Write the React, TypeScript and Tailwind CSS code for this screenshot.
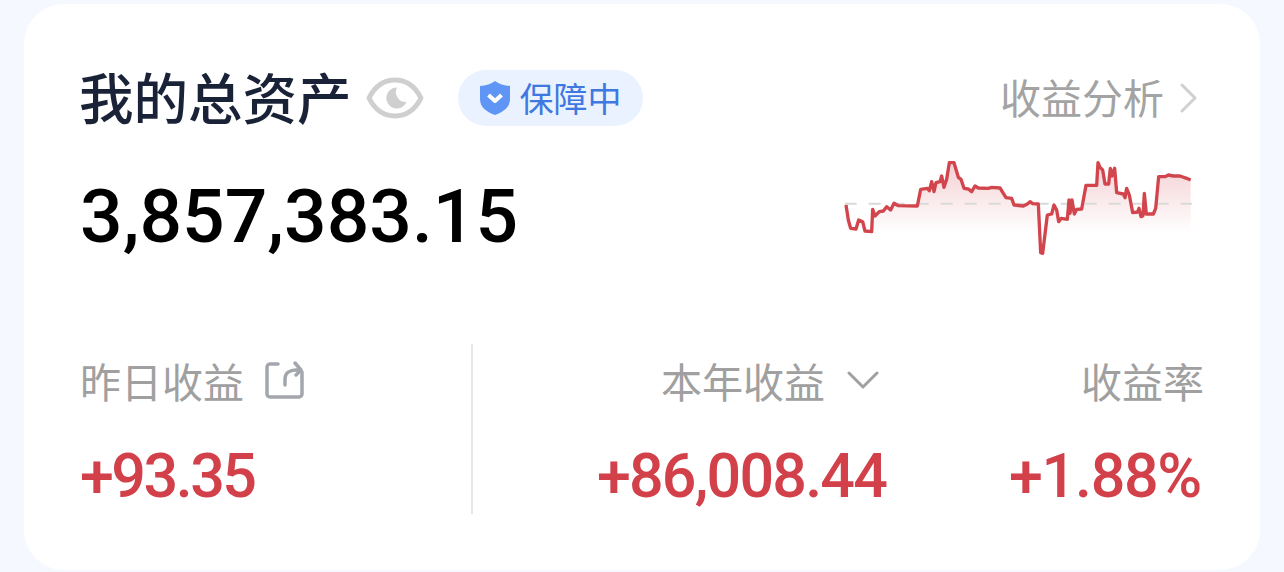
const cjk = "font-['Noto_Sans_CJK_SC','Noto_Sans',sans-serif]";
const num = "font-['Roboto','Liberation_Sans',sans-serif]";

const linePoints =
  "18,165 25,210 32,235 48,237 56,210 68,215 75,243 95,245 98,178 105,198 118,185 130,183 140,170 152,180 162,160 175,167 232,168 242,118 262,115 268,122 275,95 282,125 288,98 300,95 305,78 312,112 320,88 328,38 342,38 355,82 363,88 372,115 385,117 395,125 405,108 415,114 445,115 455,112 480,114 498,143 515,145 522,165 550,168 562,162 570,155 578,161 595,162 602,308 608,310 622,195 635,192 642,165 650,180 656,215 664,205 682,208 687,150 690,190 696,150 703,192 710,178 725,177 738,106 770,106 774,38 780,52 788,60 795,102 806,102 811,55 816,78 824,55 830,128 850,132 855,143 860,115 868,135 878,188 893,186 897,175 903,200 909,197 913,130 919,192 940,192 947,175 956,80 975,80 985,75 1000,78 1020,78 1040,85 1052,90";

const EyeIcon = () => (
  <svg width="58" height="48" viewBox="0 0 58 48" fill="none">
    <path
      d="M3 24C9 12 18 6 29 6s20 6 26 18c-6 12-15 18-26 18S9 36 3 24Z"
      stroke="#cfcfcf"
      strokeWidth="5"
      strokeLinejoin="round"
    />
    <path d="M31 13.5a10.5 10.5 0 1 0 9.5 14.5 10 10 0 0 1-9.500-14.500Z" fill="#cfcfcf" />
  </svg>
);

const ShieldIcon = () => (
  <svg width="32" height="36" viewBox="0 0 32 36">
    <path
      d="M16 1c4 3 9 4.500 15 5v13c0 8-6 12.500-15 16C7 31.500 1 27 1 19V6c6-.5 11-2 15-5Z"
      fill="#5f95f5"
    />
    <path d="M9.500 15l6.500 6 6.500-6" fill="none" stroke="#fff" strokeWidth="4" strokeLinejoin="round" />
  </svg>
);

const ShareIcon = () => (
  <svg width="40" height="40" viewBox="0 0 40 40" fill="none" stroke="#a3a6ad" strokeWidth="3.500" strokeLinecap="round" strokeLinejoin="round">
    <path d="M14 4H6a3 3 0 0 0-3 3v27a3 3 0 0 0 3 3h29a3 3 0 0 0 3-3V12" />
    <path d="M21 25v-6c0-6 5-9 11-9h5M31 3l6 7-5 5" />
  </svg>
);

const ChartLine = () => (
  <svg width="360" height="110" viewBox="0 0 1080 330" fill="none">
    <defs>
      <linearGradient id="chartFill" x1="0" y1="38" x2="0" y2="250" gradientUnits="userSpaceOnUse">
        <stop offset="0" stopColor="#d2404a" stopOpacity="0.24" />
        <stop offset="1" stopColor="#d2404a" stopOpacity="0" />
      </linearGradient>
    </defs>
    <polygon points={`18,250 ${linePoints} 1052,250`} fill="url(#chartFill)" />
    <line x1="14" y1="161" x2="1056" y2="161" stroke="#d9d9d9" strokeWidth="6" strokeDasharray="36 36" />
    <polyline points={linePoints} stroke="#d2454d" strokeWidth="10" strokeLinejoin="round" />
  </svg>
);

export default function App() {
  return (
    <div className="h-[572px] w-[1284px] overflow-hidden bg-[#f5f9ff] px-6 pt-1">
      <div className={`h-[566px] w-[1236px] rounded-[40px] bg-white pl-14 pr-14 ${cjk}`}>
        <div className="flex items-start justify-between pt-[60px]">
          <div>
            <div className="flex h-[68px] items-center">
              <span className="mb-1 -ml-px text-[54.500px] font-medium leading-none text-[#1a2238]">我的总资产</span>
              <span className="ml-[14px]"><EyeIcon /></span>
              <span className="ml-[34px] flex h-[56px] w-[185px] items-center rounded-full bg-[#e9f2fe] pl-[21px]">
                <ShieldIcon />
                <span className="ml-[9px] text-[34px] leading-none text-[#3f78e0]">保障中</span>
              </span>
            </div>
            <div className={`mt-[42px] text-[75px] font-medium leading-[84px] text-black ${num}`}>3,857,383.15</div>
          </div>
          <div className="flex flex-col items-end">
            <div className="mr-[6px] flex h-[68px] items-center">
              <span className="mb-1 text-[41px] leading-none text-[#a3a3a3]">收益分析</span>
              <svg className="ml-4" width="18" height="30" viewBox="0 0 18 30" fill="none">
                <path d="M2 2l13 13L2 28" stroke="#d0d0d0" strokeWidth="3" strokeLinecap="round" strokeLinejoin="round" />
              </svg>
            </div>
            <div className="mr-[4px] mt-[18px]"><ChartLine /></div>
          </div>
        </div>

        <div className="mt-[84px] flex h-[170px]">
          <div className="w-[393px] border-r-2 border-[#e6e6e6] pt-[15px]">
            <div className="flex h-[42px] items-center">
              <span className="text-[41px] leading-none text-[#a0a0a0]">昨日收益</span>
              <span className="ml-[20px]"><ShareIcon /></span>
            </div>
            <div className={`mt-[40px] text-[61px] font-medium leading-[70px] tracking-[-2.500px] text-[#d2404a] ${num}`}>+93.35</div>
          </div>
          <div className="flex flex-1 justify-end pt-[15px]">
            <div className="flex flex-col items-end">
              <div className="mr-[7px] flex h-[42px] items-center">
                <span className="text-[41px] leading-none text-[#a0a0a0]">本年收益</span>
                <svg className="ml-[22px]" width="32" height="18" viewBox="0 0 32 18" fill="none">
                  <path d="M2 2l14 14L30 2" stroke="#a0a0a0" strokeWidth="3" strokeLinecap="round" strokeLinejoin="round" />
                </svg>
              </div>
              <div className={`mt-[40px] text-[61px] font-medium leading-[70px] tracking-[-1.800px] text-[#d2404a] ${num}`}>+86,008.44</div>
            </div>
            <div className="ml-[123px] flex flex-col items-end">
              <div className="flex h-[42px] items-center text-[41px] leading-none text-[#a0a0a0]">收益率</div>
              <div className={`mr-[3px] mt-[40px] text-[61px] font-medium leading-[70px] tracking-[-1.300px] text-[#d2404a] ${num}`}>+1.88%</div>
            </div>
          </div>
        </div>
      </div>
    </div>
  );
}
